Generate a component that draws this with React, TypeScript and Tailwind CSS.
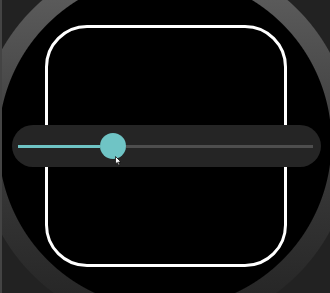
import React from 'react';

const FACE_BG =
  'bg-[linear-gradient(to_right,#444_2px,transparent_2px),radial-gradient(circle_at_165px_142px,#000_166px,transparent_167px),radial-gradient(circle_at_165px_142px,transparent_187px,#222_188px),linear-gradient(to_bottom,#5a5a5a,#3a3a3a_55%,#272727)]';

function Cursor() {
  return (
    <svg className="absolute left-[15px] top-[23px]" width="7" height="10" viewBox="0 0 7 10">
      <path d="M0.5 0.5 L0.5 8 L2.3 6.4 L3.6 9.3 L4.8 8.8 L3.6 6 L6 6 Z" fill="#fff" stroke="#111" strokeWidth="0.8" strokeLinejoin="round" />
    </svg>
  );
}

export default function App() {
  return (
    <div className={`grid w-[330px] h-[293px] overflow-hidden ${FACE_BG}`}>
      {/* Watch frame outline */}
      <div className="col-start-1 row-start-1 self-start justify-self-start ml-[45px] mt-[25px] w-[242px] h-[242px] rounded-[42px] border-[3px] border-white" />

      {/* Slider */}
      <div className="col-start-1 row-start-1 self-start justify-self-start ml-[12px] mt-[125px] w-[309px] h-[42px] rounded-full bg-[#252525] flex items-center pl-[6px] pr-[8px]">
        <div className="w-[82px] h-[3px] bg-[#6fc4c5]" />
        <div className="relative w-[26px] h-[26px] rounded-full bg-[#6fc4c5] shrink-0">
          <Cursor />
        </div>
        <div className="flex-1 h-[3px] bg-[#4e4e4e]" />
      </div>
    </div>
  );
}
